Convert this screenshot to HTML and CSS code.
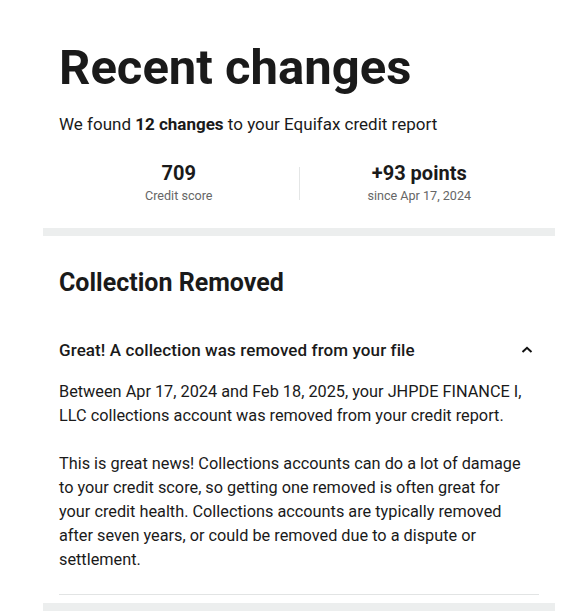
FILE: index.html
```html
<!DOCTYPE html>
<html lang="en">
<head>
    <meta charset="UTF-8">
    <meta name="viewport" content="width=device-width, initial-scale=1.0">
    <title>Recent changes</title>
    <link rel="stylesheet" href="styles.css">
</head>
<body>
    <div class="container">
        <div class="summary">
            <h1>Recent changes</h1>
            <p class="intro">We found <strong>12 changes</strong> to your Equifax credit report</p>
            <div class="stats">
                <div class="stat">
                    <span class="stat-value">709</span>
                    <span class="stat-label">Credit score</span>
                </div>
                <div class="stat-divider"></div>
                <div class="stat">
                    <span class="stat-value">+93 points</span>
                    <span class="stat-label">since Apr 17, 2024</span>
                </div>
            </div>
        </div>

        <div class="band"></div>

        <div class="change">
            <h2>Collection Removed</h2>
            <div class="detail">
                <div class="detail-head">
                    <h3>Great! A collection was removed from your file</h3>
                    <svg class="chevron" width="14" height="14" viewBox="0 0 14 14">
                        <path d="M2.5 9 L7 4.8 L11.5 9" fill="none" stroke="#111" stroke-width="2"/>
                    </svg>
                </div>
                <p>Between Apr 17, 2024 and Feb 18, 2025, your JHPDE FINANCE I, LLC collections account was removed from your credit report.</p>
                <p>This is great news! Collections accounts can do a lot of damage to your credit score, so getting one removed is often great for your credit health. Collections accounts are typically removed after seven years, or could be removed due to a dispute or settlement.</p>
            </div>
        </div>

        <div class="band"></div>
    </div>
</body>
</html>
```

FILE: styles.css
```css
*{
    padding: 0;
    margin: 0;
    box-sizing: border-box;
}
body {
    font-family: Roboto, "Noto Sans", sans-serif;
    color: #1a1a1a;
    background: #fff;
}

.container {
    width: 512px;
    margin-left: 43px;
}

.summary {
    padding: 40px 16px 22px;
}

h1 {
    font-size: 49px;
    font-weight: 700;
    line-height: 56px;
}

.intro {
    margin-top: 16px;
    font-size: 17px;
    line-height: 24px;
}

.intro strong {
    font-weight: 700;
}

.stats {
    display: flex;
    align-items: center;
    margin-top: 24px;
}

.stat {
    flex: 1;
    display: flex;
    flex-direction: column;
    align-items: center;
}

.stat-divider {
    width: 1px;
    height: 33px;
    background-color: #e4e6e6;
}

.stat-value {
    font-size: 20px;
    font-weight: 700;
    line-height: 26px;
}

.stat-label {
    font-size: 12.6px;
    color: #666;
    line-height: 20px;
}

.band {
    height: 8px;
    background-color: #eceeee;
}

.change {
    padding: 31px 16px 8px;
}

h2 {
    font-size: 25px;
    font-weight: 700;
    line-height: 32px;
}

.detail {
    margin-top: 39px;
    border-bottom: 1px solid #e2e4e4;
    padding-bottom: 22px;
}

.detail-head {
    display: flex;
    justify-content: space-between;
    align-items: center;
    padding-right: 5px;
}

h3 {
    font-size: 17px;
    font-weight: 500;
    letter-spacing: 0.1px;
    line-height: 24px;
}

.detail p {
    max-width: 476px;
    margin-top: 18px;
    font-size: 16.3px;
    line-height: 24px;
}

.detail p + p {
    margin-top: 24px;
}
```
